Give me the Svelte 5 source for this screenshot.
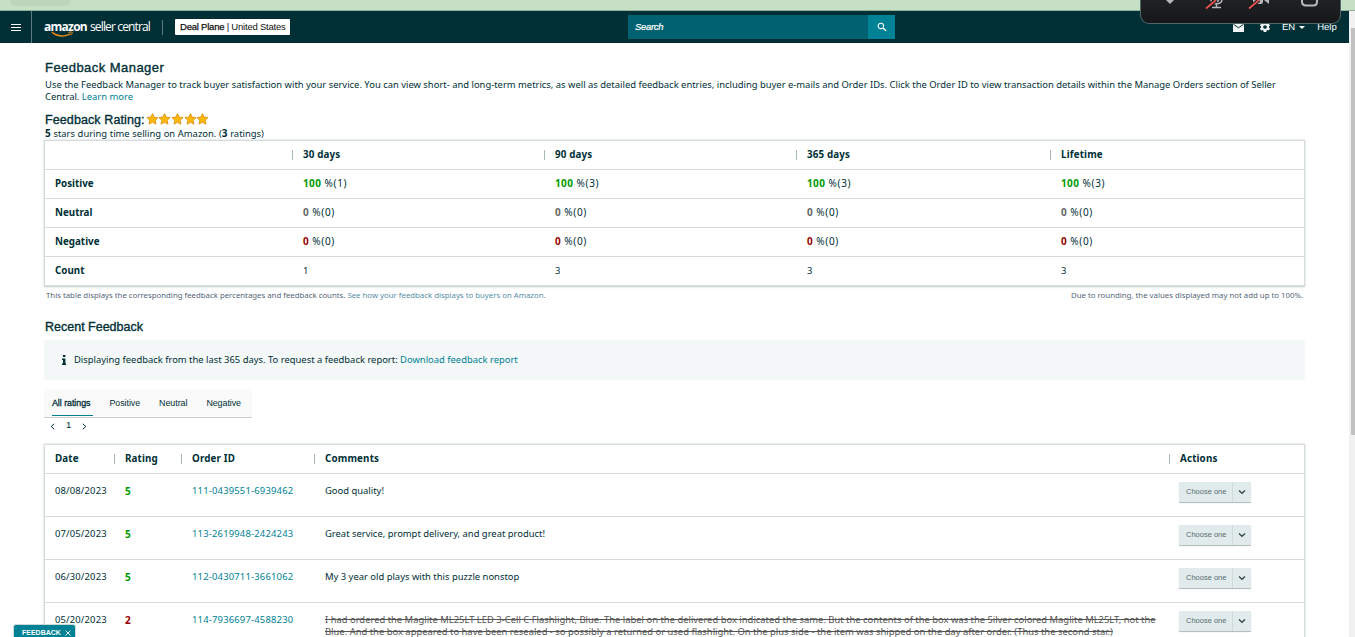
<script lang="ts">
	const periods = ['30 days', '90 days', '365 days', 'Lifetime'];
	const metrics = [
		{ label: 'Positive', tone: 'good', pct: 100, counts: [1, 3, 3, 3] },
		{ label: 'Neutral', tone: 'neutral', pct: 0, counts: [0, 0, 0, 0] },
		{ label: 'Negative', tone: 'bad', pct: 0, counts: [0, 0, 0, 0] }
	];
	const totals = [1, 3, 3, 3];

	const feedback = [
		{ date: '08/08/2023', rating: 5, order: '111-0439551-6939462', lines: ['Good quality!'] },
		{
			date: '07/05/2023',
			rating: 5,
			order: '113-2619948-2424243',
			lines: ['Great service, prompt delivery, and great product!']
		},
		{
			date: '06/30/2023',
			rating: 5,
			order: '112-0430711-3661062',
			lines: ['My 3 year old plays with this puzzle nonstop']
		},
		{
			date: '05/20/2023',
			rating: 2,
			order: '114-7936697-4588230',
			struck: true,
			lines: [
				'I had ordered the Maglite ML25LT LED 3-Cell C Flashlight, Blue. The label on the delivered box indicated the same. But the contents of the box was the Silver colored Maglite ML25LT, not the',
				'Blue. And the box appeared to have been resealed - so possibly a returned or used flashlight. On the plus side - the item was shipped on the day after order. (Thus the second star.)'
			]
		}
	];

	const tabs = ['All ratings', 'Positive', 'Neutral', 'Negative'];
	let activeTab = $state('All ratings');
	let showFeedback = $state(true);
</script>

<div class="page">
	<div class="browser-strip"><span class="browser-tab"></span></div>

	<header class="topbar">
		<button class="menu" aria-label="Menu">
			<svg width="10" height="9" viewBox="0 0 10 9">
				<path d="M0 1.5h10M0 4.5h10M0 7.5h10" stroke="#fff" stroke-width="1" />
			</svg>
		</button>
		<div class="brand">
			<b>amazon</b><span>seller central</span>
			<svg class="smile" width="24" height="7" viewBox="0 0 24 7" fill="none">
				<path d="M1 1.2C6 5.8 14 6.2 19.5 2.8" stroke="#f29111" stroke-width="1.3" />
				<path d="M17.5 1.5c2-.7 3.5-.6 3.7-.2s-.2 1.9-1.2 3" stroke="#f29111" />
			</svg>
		</div>
		<div class="store"><b>Deal Plane</b>&nbsp;|&nbsp;United States</div>
		<div class="search">
			<span class="search-input">Search</span>
			<button class="search-btn" aria-label="Search">
				<svg width="10" height="10" viewBox="0 0 11 11" fill="none" stroke="#fff">
					<circle cx="4.3" cy="4.3" r="3" stroke-width="1.2" />
					<path d="M6.5 6.5L10 9.7" stroke-width="1.5" />
				</svg>
			</button>
		</div>
		<nav class="tools">
			<svg class="mail" width="11" height="9" viewBox="0 0 11 9">
				<path d="M0 0h11v9H0z" fill="#f2f5f5" />
				<path d="M.5 1.3l5 3.5 5-3.5" fill="none" stroke="#002f36" />
			</svg>
			<svg class="gear" width="12" height="12" viewBox="0 0 24 24">
				<path
					fill="#f2f5f5"
					d="M19.8 13.1a8 8 0 0 0 0-2.2l2.3-1.8-2.4-4.1-2.7 1.1a8 8 0 0 0-1.9-1.1L14.7 2H9.3l-.4 3A8 8 0 0 0 7 6.1L4.3 5 1.9 9.1l2.3 1.8a8 8 0 0 0 0 2.2l-2.3 1.8L4.3 19 7 17.9a8 8 0 0 0 1.9 1.1l.4 3h5.4l.4-3a8 8 0 0 0 1.9-1.1l2.7 1.1 2.4-4.1zM12 15.7a3.7 3.7 0 1 1 0-7.4 3.7 3.7 0 0 1 0 7.4z"
				/>
			</svg>
			<span class="lang">EN</span>
			<span class="caret"></span>
			<span class="help">Help</span>
		</nav>
	</header>

	<div class="meeting-bar">
		<svg width="200" height="23" viewBox="0 0 200 23" fill="none">
			<path d="M25 0h8l-4 4z" fill="#b9b9bb" />
			<g stroke="#b9b9bb" stroke-width="1.5">
				<path d="M70 0c.5 5 10.5 5 11 0M75.5 4v3.5M71 7.5h9" />
				<path d="M73.3 0c.4 2 4 2 4.4 0" />
				<path d="M161 0v1.500q0 4 4 4h7.500q3.500 0 3.500-4V0" stroke-width="2" />
			</g>
			<path d="M112 0h10v1.500q0 2.500-2.500 2.500H112zM123 0h5v4z" fill="#b9b9bb" />
			<path d="M65 8.500L75 0M108 8.500L118 0" stroke="#1b1c1e" stroke-width="4" />
			<path d="M65 8.500L75 0M108 8.500L118 0" stroke="#f0524f" stroke-width="1.7" />
		</svg>
	</div>

	<main>
		<h1>Feedback Manager</h1>
		<p class="intro">
			<span class="intro-line">Use the Feedback Manager to track buyer satisfaction with your service. You can view short- and long-term metrics, as well as detailed feedback entries, including buyer e-mails and Order IDs. Click the Order ID to view transaction details within the Manage Orders section of Seller</span>
			<br />Central. <a href="#learn">Learn more</a>
		</p>

		<div class="rating-title">
			<h2>Feedback Rating:</h2>
			<span class="stars">
				{#each { length: 5 } as _}
					<svg width="12.7" height="12" viewBox="0 0 12.7 12">
						<path
							d="M6.5 .6l1.7 3.5 3.9.5-2.9 2.7.8 3.9-3.5-1.9L3 11.2l.8-3.9L.9 4.6l3.9-.5z"
							fill="#fdb90b"
							stroke="#d98d10"
							stroke-width=".8"
							stroke-linejoin="round"
						/>
					</svg>
				{/each}
			</span>
		</div>
		<p class="summary"><b>5</b> stars during time selling on Amazon. (<b>3</b> ratings)</p>

		<section class="card metrics">
			<div class="row head">
				<div class="cell"></div>
				{#each periods as period}
					<div class="cell sep">{period}</div>
				{/each}
			</div>
			{#each metrics as metric}
				<div class="row">
					<div class="cell label">{metric.label}</div>
					{#each metric.counts as count}
						<div class="cell value"><b class={metric.tone}>{metric.pct}</b> %({count})</div>
					{/each}
				</div>
			{/each}
			<div class="row">
				<div class="cell label">Count</div>
				{#each totals as total}
					<div class="cell">{total}</div>
				{/each}
			</div>
		</section>

		<div class="footnotes">
			<span class="note-left">This table displays the corresponding feedback percentages and feedback counts. <a href="#display">See how your feedback displays to buyers on Amazon.</a></span>
			<span class="note-right">Due to rounding, the values displayed may not add up to 100%.</span>
		</div>

		<h2 class="recent">Recent Feedback</h2>

		<div class="notice">
			<svg width="4" height="10" viewBox="0 0 4 10" fill="#002f36">
				<path d="M1 0h2.4v2H1zM0 3.5h3.4V8.5H4V10H0V8.500h1V5H0z" />
			</svg>
			<span>Displaying feedback from the last 365 days. To request a feedback report: <a href="#report">Download feedback report</a></span>
		</div>

		<div class="tabs">
			{#each tabs as tab}
				<button class:active={activeTab === tab} onclick={() => (activeTab = tab)}>{tab}</button>
			{/each}
		</div>
		<div class="pager">
			<svg width="5" height="7" viewBox="0 0 5 7"><path d="M4.2 .8L1.2 3.5l3 2.7" /></svg>
			<span>1</span>
			<svg width="5" height="7" viewBox="0 0 5 7"><path d="M.8 .8l3 2.7-3 2.7" /></svg>
		</div>

		<section class="card entries">
			<div class="row head">
				<div class="cell">Date</div>
				<div class="cell sep">Rating</div>
				<div class="cell sep">Order ID</div>
				<div class="cell sep">Comments</div>
				<div class="cell sep">Actions</div>
			</div>
			{#each feedback as entry}
				<div class="row">
					<div class="cell date">{entry.date}</div>
					<div class="cell"><b class={entry.rating > 3 ? 'good' : 'bad'}>{entry.rating}</b></div>
					<div class="cell order"><a href="#order">{entry.order}</a></div>
					<div class="cell comment" class:struck={entry.struck}>
						{#each entry.lines as line}
							<div><span>{line}</span></div>
						{/each}
					</div>
					<div class="cell action">
						<button class="choose">
							<span>Choose one</span>
							<svg width="18" height="20" viewBox="0 0 18 20" fill="none">
								<path d="M6 8.5l3 2.8 3-2.8" stroke="#34494e" stroke-width="1.4" />
							</svg>
						</button>
					</div>
				</div>
			{/each}
		</section>
	</main>

	<div class="scrollbar"><span class="thumb"></span></div>

	{#if showFeedback}
		<button class="feedback-tag" onclick={() => (showFeedback = false)}>
			FEEDBACK
			<svg width="6" height="6" viewBox="0 0 6 6"><path d="M.5 .5l5 5M5.5 .5l-5 5" stroke="#fff" stroke-width=".9" /></svg>
		</button>
	{/if}
</div>

<style>
	:global(body) {
		overflow: hidden;
	}

	.page {
		position: relative;
		width: 1355px;
		height: 637px;
		overflow: hidden;
		background: #fff;
		color: #002f36;
		font: 9.41px/12px 'Noto Sans', sans-serif;
	}

	h1,
	h2,
	p {
		margin: 0;
	}

	a {
		color: #007f94;
		text-decoration: none;
	}

	b {
		font-size: 10px;
	}

	button {
		border: 0;
		padding: 0;
		font: inherit;
		color: inherit;
	}

	.browser-strip {
		box-sizing: border-box;
		height: 11px;
		background: #c6e0c5;
		border-bottom: 1px solid #8fb096;
	}

	.browser-tab {
		display: block;
		width: 61px;
		height: 6px;
		margin-left: 10px;
		border-radius: 0 0 8px 8px;
		background: #bcd6bd;
	}

	.topbar {
		display: flex;
		align-items: center;
		width: 1349px;
		height: 32px;
		background: #002f36;
		color: #fff;
	}

	.menu {
		display: flex;
		align-items: center;
		justify-content: center;
		box-sizing: border-box;
		width: 32px;
		height: 32px;
		background: none;
		border-right: 1px solid #5d7b80;
	}

	.brand {
		position: relative;
		display: flex;
		gap: 3px;
		box-sizing: border-box;
		width: 119px;
		margin: 0 12px;
		padding-bottom: 2px;
		border-right: 1px solid #5d7b80;
		font: 12px/13px 'Open Sans', sans-serif;
		letter-spacing: -0.85px;
		white-space: nowrap;
	}

	.brand b {
		font-size: 12px;
		letter-spacing: -0.75px;
	}

	.smile {
		position: absolute;
		left: 7px;
		top: 11px;
	}

	.store {
		box-sizing: border-box;
		width: 115px;
		height: 16px;
		padding-left: 5px;
		border-radius: 1px;
		background: #fff;
		color: #111;
		font: 9.5px/16px 'Liberation Sans', sans-serif;
		letter-spacing: -0.22px;
		white-space: nowrap;
	}

	.store b {
		font-size: inherit;
		font-weight: 500;
		-webkit-text-stroke: 0.25px #111;
	}

	.search {
		display: flex;
		width: 267px;
		height: 24px;
		margin-left: 338px;
	}

	.search-input {
		flex: 1;
		padding-left: 7px;
		background: #006170;
		font: italic 9.5px/24px 'Liberation Sans', sans-serif;
		letter-spacing: -0.3px;
		-webkit-text-stroke: 0.2px #fff;
	}

	.search-btn {
		display: flex;
		align-items: center;
		justify-content: center;
		width: 27px;
		background: #008296;
	}

	.tools {
		display: flex;
		align-items: center;
		margin-left: 338px;
		font: 9.5px/12px 'Liberation Sans', sans-serif;
	}

	.gear {
		margin: 0 11px 0 15px;
	}

	.caret {
		margin: 0 12px 0 4px;
		border: 3px solid transparent;
		border-top-color: #fff;
		border-bottom: 0;
	}

	.meeting-bar {
		position: absolute;
		left: 1140px;
		top: 0;
		box-sizing: border-box;
		width: 201px;
		height: 24px;
		overflow: hidden;
		border: 1px solid #536568;
		border-top: 0;
		border-radius: 0 0 9px 9px;
		background: linear-gradient(#202124, #151719);
	}

	main {
		width: 1261px;
		margin-left: 44px;
		padding-top: 17px;
	}

	h1,
	h2 {
		padding-left: 1px;
		font: 500 12.5px/16px 'Liberation Sans', sans-serif;
		-webkit-text-stroke: 0.35px #002f36;
	}

	h1 {
		font-size: 13px;
		letter-spacing: 0.45px;
	}

	.intro {
		height: 24px;
		margin-top: 3px;
		padding-left: 1px;
		white-space: nowrap;
	}

	.rating-title {
		display: flex;
		height: 15px;
		margin-top: 9px;
		letter-spacing: 0.1px;
	}

	.stars {
		display: flex;
		margin-left: 1px;
		padding-top: 1px;
	}

	.summary {
		height: 13px;
		padding-left: 1px;
		word-spacing: 0.2px;
	}

	.card {
		box-sizing: border-box;
		border: 1px solid #d5dbdb;
		box-shadow: 0 0 2px #c5cccc;
	}

	.row {
		display: grid;
		border-top: 1px solid #d5dbdb;
	}

	.head {
		border-top: 0;
		font-size: 9.8px;
		font-weight: bold;
		letter-spacing: 0.15px;
	}

	.cell {
		position: relative;
		height: 28px;
		padding-left: 10px;
		line-height: 27px;
		white-space: nowrap;
	}

	.sep::before {
		content: '';
		position: absolute;
		left: -1px;
		top: 9px;
		height: 10px;
		border-left: 1px solid #aab7b8;
	}

	.metrics {
		height: 147px;
		border-bottom-width: 2px;
	}

	.metrics .row {
		grid-template-columns: 248px 252px 252px 254px 1fr;
	}

	.label {
		font-size: 9.8px;
		font-weight: bold;
	}

	.value {
		font-size: 10px;
		letter-spacing: 0.65px;
	}

	.value b {
		letter-spacing: 0.4px;
	}

	.good {
		color: #090;
	}

	.neutral {
		color: #666;
	}

	.bad {
		color: #900;
	}

	.footnotes {
		display: flex;
		justify-content: space-between;
		padding: 2px 2px 0;
		font-size: 7.8px;
		line-height: 12px;
		color: #567;
	}

	.footnotes a {
		color: #5590a5;
	}

	.recent {
		margin-top: 18px;
	}

	.notice {
		display: flex;
		align-items: center;
		gap: 8px;
		height: 40px;
		margin-top: 5px;
		padding-left: 18px;
		background: #f4f8f9;
	}

	.tabs {
		display: flex;
		gap: 16px;
		box-sizing: border-box;
		width: 208px;
		height: 29px;
		margin-top: 9px;
		padding-left: 8px;
		background: #fafafa;
		border-bottom: 1px solid #ccc;
	}

	.tabs button {
		height: 27px;
		padding-right: 3px;
		background: none;
		font: 8.9px/28px 'Liberation Sans', sans-serif;
		letter-spacing: -0.05px;
	}

	.tabs .active {
		border-bottom: 1px solid #008296;
		-webkit-text-stroke: 0.3px #002f36;
	}

	.pager {
		display: flex;
		align-items: center;
		height: 16px;
		gap: 11px;
		padding-left: 6px;
		font: 9.5px/14px 'Liberation Sans', sans-serif;
	}

	.pager span {
		margin-top: -2px;
	}

	.pager path {
		fill: none;
		stroke: #002f36;
	}

	.entries {
		height: 220px;
		margin-top: 10px;
	}

	.entries .row {
		grid-template-columns: 70px 67px 133px 855px 1fr;
	}

	.entries .row:not(.head) {
		height: 42px;
	}

	.entries .row:not(.head) .cell {
		padding-top: 11px;
		line-height: 12px;
	}

	.date {
		letter-spacing: 0.17px;
	}

	.order {
		letter-spacing: 0.2px;
	}

	.struck span {
		color: #555;
		text-decoration: line-through;
	}

	.entries .row:not(.head) .action {
		padding: 8px 0 0 9px;
	}

	.choose {
		display: flex;
		width: 72px;
		height: 20px;
		border-radius: 1px;
		background: #e2ebec;
		box-shadow: 0 1px 1px #aab7b8;
		color: #566b70;
		font: 7.5px/20px 'Liberation Sans', sans-serif;
	}

	.choose span {
		box-sizing: border-box;
		width: 54px;
		padding-left: 7px;
		text-align: left;
		border-right: 1px solid #cfdadb;
	}

	.scrollbar {
		position: absolute;
		right: 0;
		top: 11px;
		width: 6px;
		height: 626px;
		background: #f1f1f1;
	}

	.thumb {
		display: block;
		height: 407px;
		margin: 17px 0 0 2px;
		background: #c1c1c1;
	}

	.feedback-tag {
		position: absolute;
		left: 13px;
		top: 624px;
		display: flex;
		align-items: center;
		gap: 4px;
		box-sizing: border-box;
		width: 63px;
		height: 16px;
		padding: 1px 0 0 8px;
		border: 1px solid #cfd8d8;
		border-radius: 3px 3px 0 0;
		background: #008296;
		color: #fff;
		font: bold 7px/14px 'Liberation Sans', sans-serif;
	}
</style>
